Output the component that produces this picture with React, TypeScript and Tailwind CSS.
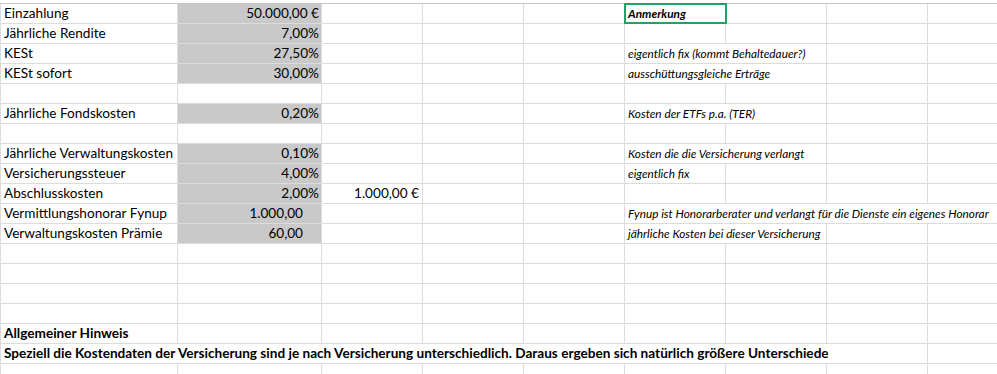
import React from 'react';

type Row = {
    a?: string;
    b?: string;
    bIndent?: boolean;
    c?: string;
    note?: string;
    span?: number;
    bold?: boolean;
    head?: boolean;
    wide?: string;
};

const rows: Row[] = [
    { a: 'Einzahlung', b: '50.000,00 €', head: true },
    { a: 'Jährliche Rendite', b: '7,00%' },
    { a: 'KESt', b: '27,50%', note: 'eigentlich fix (kommt Behaltedauer?)', span: 2 },
    { a: 'KESt sofort', b: '30,00%', note: 'ausschüttungsgleiche Erträge', span: 2 },
    {},
    { a: 'Jährliche Fondskosten', b: '0,20%', note: 'Kosten der ETFs p.a. (TER)', span: 2 },
    {},
    { a: 'Jährliche Verwaltungskosten', b: '0,10%', note: 'Kosten die die Versicherung verlangt', span: 2 },
    { a: 'Versicherungssteuer', b: '4,00%', note: 'eigentlich fix', span: 1 },
    { a: 'Abschlusskosten', b: '2,00%', c: '1.000,00 €' },
    {
        a: 'Vermittlungshonorar Fynup',
        b: '1.000,00',
        bIndent: true,
        note: 'Fynup ist Honorarberater und verlangt für die Dienste ein eigenes Honorar',
        span: 4,
    },
    { a: 'Verwaltungskosten Prämie', b: '60,00', bIndent: true, note: 'jährliche Kosten bei dieser Versicherung', span: 2 },
    {},
    {},
    {},
    {},
    { a: 'Allgemeiner Hinweis', bold: true },
    {
        wide: 'Speziell die Kostendaten der Versicherung sind je nach Versicherung unterschiedlich. Daraus ergeben sich natürlich größere Unterschiede',
    },
    {},
];

const cell = 'h-[20px] border-r border-b border-[#dcdcdc] whitespace-nowrap overflow-visible leading-[19px]';
const text = "font-['Lato',sans-serif] text-[13.6px] text-black";
const noteText = "font-['Lato',sans-serif] italic text-[11.8px] text-black";

function Empty({ n }: { n: number }) {
    return (
        <>
            {Array.from({ length: n }).map((_, i) => (
                <div key={i} className={cell} />
            ))}
        </>
    );
}

function SheetRow({ row }: { row: Row }) {
    if (row.wide) {
        return (
            <>
                <div className={`${cell} col-span-8 border-l pl-[3px] font-bold ${text}`}>{row.wide}</div>
                <Empty n={1} />
            </>
        );
    }

    const span = row.span ?? 1;
    const noteSpanClass = ['col-span-1', 'col-span-2', 'col-span-3', 'col-span-4'][span - 1];

    return (
        <>
            <div className={`${cell} border-l pl-[3px] ${text} ${row.bold ? 'font-bold' : ''}`}>{row.a}</div>
            <div
                className={`${cell} text-right ${text} ${row.b ? 'bg-[#c9c9c9]' : ''} ${row.bIndent ? 'pr-[18px]' : 'pr-[2px]'}`}
            >
                {row.b}
            </div>
            <div className={`${cell} text-right pr-[3px] ${text}`}>{row.c}</div>
            <Empty n={2} />
            {row.head ? (
                <div className={`${cell} relative pl-[3px] ${noteText} font-bold`}>
                    Anmerkung
                    <div className="absolute -left-px -top-px -right-[2px] -bottom-px border-2 border-[#21a366]" />
                </div>
            ) : (
                <div className={`${cell} ${noteSpanClass} pl-[3px] ${noteText}`}>{row.note}</div>
            )}
            <Empty n={4 - (row.head ? 1 : span)} />
        </>
    );
}

export default function App() {
    return (
        <div className="w-[997px] h-[374px] overflow-hidden bg-white pt-[3px]">
            <div className="grid grid-cols-[178px_144px_repeat(7,101px)] w-[1029px] border-t border-[#c4c4c4]">
                {rows.map((row, i) => (
                    <SheetRow key={i} row={row} />
                ))}
            </div>
        </div>
    );
}
